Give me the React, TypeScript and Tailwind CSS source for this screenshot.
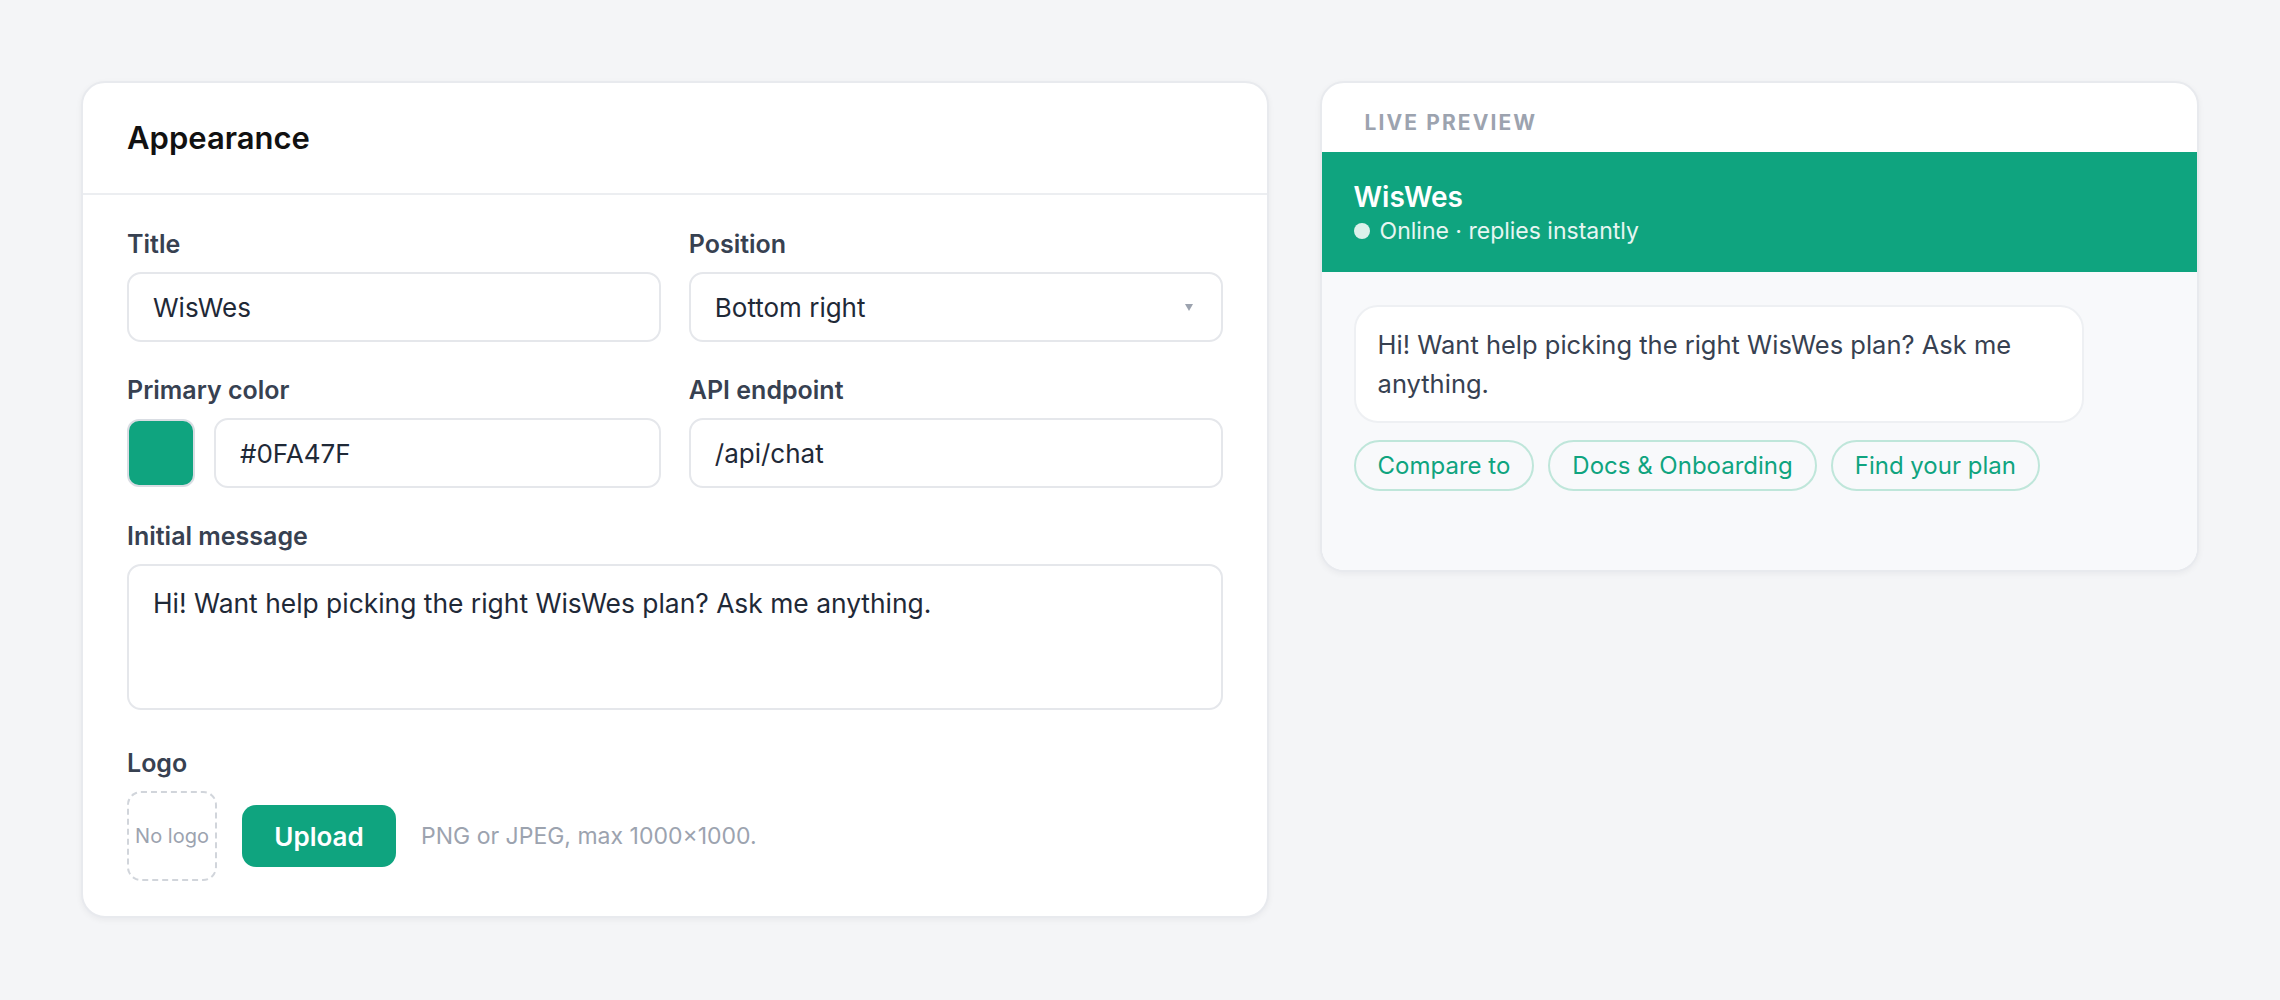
import React from "react";

const font = { fontFamily: "Inter, 'Noto Sans', sans-serif" };

const Label = ({ children }: { children: React.ReactNode }) => (
  <div className="text-[25px] leading-[32px] font-semibold text-[#374151] mb-[12px]">
    {children}
  </div>
);

const inputCls =
  "h-[70px] w-full rounded-[14px] border-2 border-[#e5e7eb] bg-white px-[24px] text-[26px] text-[#1f2937] outline-none";

const Appearance = () => {
  return (
    <div className="rounded-[24px] border-2 border-[#e8eaee] bg-white shadow-[0_2px_6px_rgba(16,24,40,0.05)]">
      <div className="border-b-2 border-[#eceef1] px-[44px] pt-[35px] pb-[35px]">
        <h2 className="text-[31px] leading-[40px] font-semibold text-[#111111]">
          Appearance
        </h2>
      </div>
      <div className="px-[44px] pt-[33px] pb-[35px] flex flex-col gap-[32px]">
        <div className="grid grid-cols-2 gap-[28px]">
          <div>
            <Label>Title</Label>
            <input className={inputCls} defaultValue="WisWes" />
          </div>
          <div>
            <Label>Position</Label>
            <div className={inputCls + " flex items-center justify-between"}>
              <span>Bottom right</span>
              <svg width="8" height="7" viewBox="0 0 8 7" className="mr-[4px]">
                <polygon points="0,0 8,0 4,7" fill="#9ca3af" />
              </svg>
            </div>
          </div>
        </div>
        <div className="grid grid-cols-2 gap-[28px]">
          <div>
            <Label>Primary color</Label>
            <div className="flex items-center gap-[19px]">
              <div className="h-[68px] w-[68px] shrink-0 rounded-[12px] border-2 border-[#d9dde3] bg-[#0FA47F]" />
              <input className={inputCls} defaultValue="#0FA47F" />
            </div>
          </div>
          <div>
            <Label>API endpoint</Label>
            <input className={inputCls} defaultValue="/api/chat" />
          </div>
        </div>
        <div>
          <Label>Initial message</Label>
          <textarea
            className="block h-[146px] w-full resize-none rounded-[14px] border-2 border-[#e5e7eb] bg-white px-[24px] py-[18px] text-[26.4px] leading-[39px] text-[#1f2937] outline-none"
            defaultValue="Hi! Want help picking the right WisWes plan? Ask me anything."
          />
        </div>
        <div className="mt-[5px]">
          <Label>Logo</Label>
          <div className="flex items-center">
            <div className="flex h-[90px] w-[90px] items-center justify-center rounded-[14px] border-2 border-dashed border-[#d1d5db] text-[20px] text-[#9ca3af]">
              No logo
            </div>
            <button className="ml-[25px] h-[62px] w-[154px] rounded-[14px] bg-[#0FA47F] text-[26px] font-semibold text-white">
              Upload
            </button>
            <span className="ml-[25px] text-[23px] text-[#9ca3af]">
              PNG or JPEG, max 1000×1000.
            </span>
          </div>
        </div>
      </div>
    </div>
  );
};

const chips = ["Compare to", "Docs & Onboarding", "Find your plan"];

const Preview = () => {
  return (
    <div className="overflow-hidden rounded-[24px] border-2 border-[#e8eaee] bg-white shadow-[0_2px_6px_rgba(16,24,40,0.05)]">
      <div className="px-[43px] pt-[26px] pb-[15px] text-[21px] leading-[28px] font-bold uppercase tracking-[0.1em] text-[#9ca3af]">
        Live preview
      </div>
      <div className="bg-[#0FA47F] px-[32px] pt-[27px] pb-[25px] text-white">
        <div className="text-[28px] leading-[36px] font-semibold">WisWes</div>
        <div className="flex items-center text-[23px] leading-[32px] text-white/90">
          <span className="mr-[10px] h-[16px] w-[16px] rounded-full bg-[#dcf1eb]" />
          Online · replies instantly
        </div>
      </div>
      <div className="min-h-[298px] bg-[#f8f9fb] px-[32px] pt-[33px] pb-[32px]">
        <div className="max-w-[730px] rounded-[24px] border-2 border-[#eef0f3] bg-white px-[22px] py-[18px] text-[25.5px] leading-[39px] text-[#374151]">
          Hi! Want help picking the right WisWes plan? Ask me anything.
        </div>
        <div className="mt-[17px] flex flex-wrap gap-[14px]">
          {chips.map((c) => (
            <span
              key={c}
              className="flex h-[51px] items-center rounded-full border-2 border-[#bfe6da] px-[22px] text-[24px] text-[#0FA47F]"
            >
              {c}
            </span>
          ))}
        </div>
      </div>
    </div>
  );
};

export default function App() {
  return (
    <div style={font} className="min-h-[1000px] bg-[#f4f5f7] px-[81px] pt-[81px]">
      <div className="grid grid-cols-[1187fr_879fr] items-start gap-[51px]">
        <Appearance />
        <Preview />
      </div>
    </div>
  );
}
